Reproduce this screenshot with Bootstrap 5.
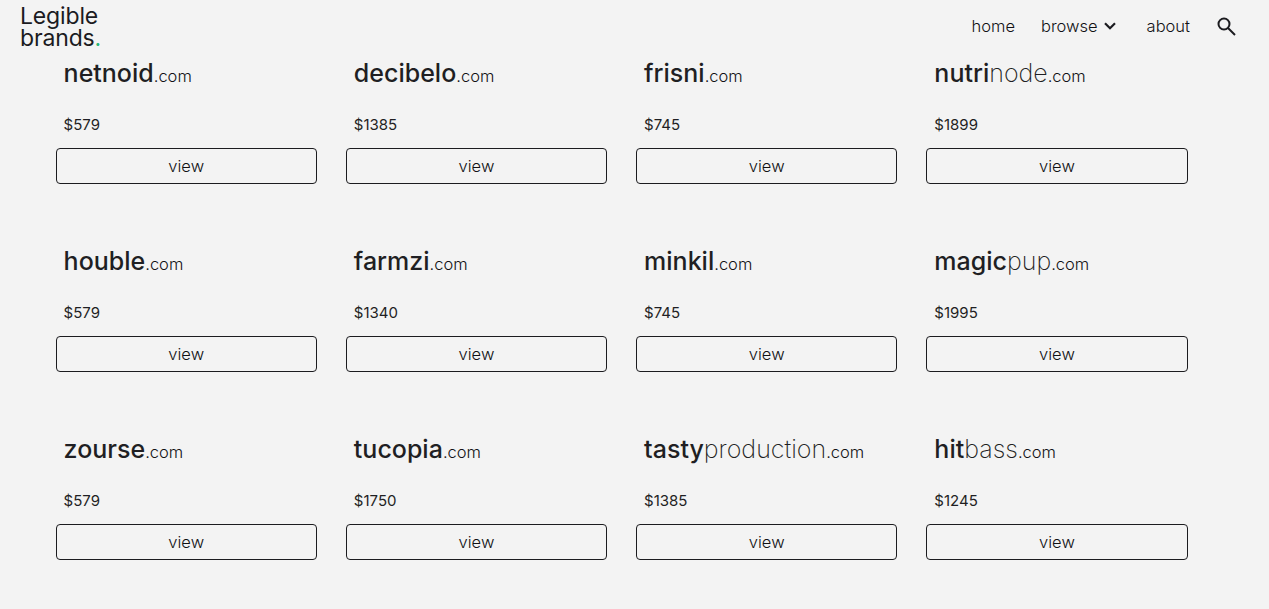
<!DOCTYPE html>
<html lang="en">
<head>
  <meta charset="UTF-8" />
  <title>Legible brands</title>
  <link href="https://cdn.jsdelivr.net/npm/bootstrap@5.3.3/dist/css/bootstrap.min.css" rel="stylesheet" />
  <style>
    body { background: #f3f3f3; color: #1f1f23; font-family: "Inter", "Liberation Sans", sans-serif; overflow: hidden; }
    .top-bar { height: 56px; padding: 5px 33px 0 20px; }
    .logo-text { font-size: 23px; line-height: 22px; font-weight: 400; color: #1b1b1f; text-decoration: none; letter-spacing: -.15px; }
    .logo-dot { color: #2bb673; }
    .top-links { height: 42px; font-size: 16.5px; font-weight: 350; }
    .top-links a { color: #111114; text-decoration: none; }
    .link-home { margin-right: 26px; }
    .link-browse { margin-right: 31px; gap: 6px; }
    .link-about { margin-right: 27px; }
    .domain-grid { width: 1161px; margin-left: 41.1px; --bs-gutter-x: 29px; --bs-gutter-y: 0; }
    .domain-item { height: 188px; }
    .domain-name { font-size: 25px; line-height: 34px; font-weight: 400; padding-left: 8px; margin: 0; white-space: nowrap; }
    .domain-name b { font-weight: 500; }
    .domain-name span { font-weight: 200; }
    .domain-name small { font-size: 16.5px; font-weight: 350; color: #111114; }
    .domain-price { font-size: 15px; line-height: 24px; font-weight: 400; padding-left: 8px; margin: 20px 0 11px; }
    .view-btn { height: 36px; padding: 0; font-size: 16.5px; font-weight: 350; line-height: 34px; color: #111114; border-color: #1b1b1f; border-radius: 4px; }
  </style>
</head>
<body>
  <nav class="top-bar d-flex justify-content-between align-items-start">
    <a class="logo-text d-block" href="#">Legible<br>brands<span class="logo-dot">.</span></a>
    <div class="top-links d-flex align-items-center">
      <a href="#" class="link-home">home</a>
      <a href="#" class="link-browse d-flex align-items-center">browse
        <svg width="12" height="8" viewBox="0 0 12 8" fill="none" stroke="#1b1b1f" stroke-width="2.2"><path d="M1 1.2l5 5 5-5"/></svg>
      </a>
      <a href="#" class="link-about">about</a>
      <a href="#" class="d-flex" aria-label="search">
        <svg width="19" height="19" viewBox="0 0 19 19" fill="none" stroke="#1b1b1f" stroke-width="2"><circle cx="7" cy="7" r="5.5"/><path d="M11 11l7 7"/></svg>
      </a>
    </div>
  </nav>

  <div class="row domain-grid" id="grid"></div>

  <script>
    const domains = [
      ['netnoid', '', '$579'], ['decibelo', '', '$1385'], ['frisni', '', '$745'], ['nutri', 'node', '$1899'],
      ['houble', '', '$579'], ['farmzi', '', '$1340'], ['minkil', '', '$745'], ['magic', 'pup', '$1995'],
      ['zourse', '', '$579'], ['tucopia', '', '$1750'], ['tasty', 'production', '$1385'], ['hit', 'bass', '$1245']
    ];
    const grid = document.getElementById('grid');
    domains.forEach(([bold, light, price]) => {
      const col = document.createElement('div');
      col.className = 'col-3 domain-item';
      col.innerHTML = `
        <p class="domain-name"><b>${bold}</b><span>${light}</span><small>.com</small></p>
        <p class="domain-price">${price}</p>
        <button class="btn btn-outline-dark w-100 view-btn d-block">view</button>
      `;
      grid.appendChild(col);
    });
  </script>
  <script src="https://cdn.jsdelivr.net/npm/bootstrap@5.3.3/dist/js/bootstrap.bundle.min.js"></script>
</body>
</html>
